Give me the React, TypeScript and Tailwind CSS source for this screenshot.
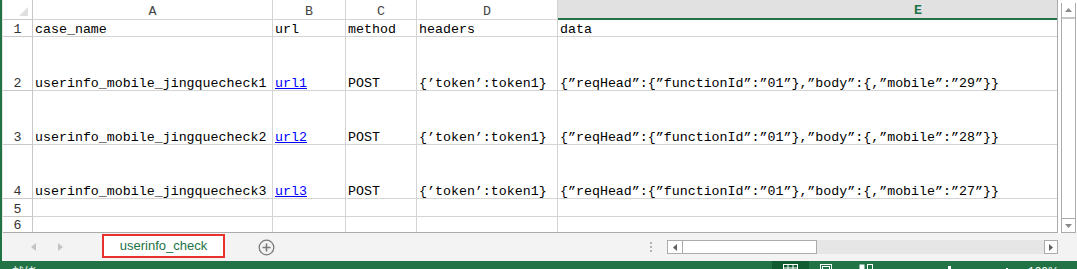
const q = '\u201D';
const s = '\u2019';

const dataText = (n: string) =>
  `{${q}reqHead${q}:{${q}functionId${q}:${q}01${q}},${q}body${q}:{,${q}mobile${q}:${q}${n}${q}}}`;

type Row = { num: number; cells: string[] };

const rows: Row[] = [
  { num: 1, cells: ['case_name', 'url', 'method', 'headers', 'data'] },
  {
    num: 2,
    cells: ['userinfo_mobile_jingquecheck1', 'url1', 'POST', `{${s}token${s}:token1}`, dataText('29')],
  },
  {
    num: 3,
    cells: ['userinfo_mobile_jingquecheck2', 'url2', 'POST', `{${s}token${s}:token1}`, dataText('28')],
  },
  {
    num: 4,
    cells: ['userinfo_mobile_jingquecheck3', 'url3', 'POST', `{${s}token${s}:token1}`, dataText('27')],
  },
  { num: 5, cells: ['', '', '', '', ''] },
  { num: 6, cells: ['', '', '', '', ''] },
];

const letters = ['A', 'B', 'C', 'D'];

const Grid = () => (
  <div className="grid w-[1055px] h-[233px] grid-cols-[30px_240px_73px_71px_141px_499px] grid-rows-[20px_17px_54px_54px_54px_18px_16px] overflow-hidden border-r border-b border-[#ababab]">
    {/* corner */}
    <div className="border-r border-b border-[#c8c8c8] bg-white">
      <svg width="29" height="19">
        <polygon points="25,7 25,16 16,16" fill="#dfdfdf" />
      </svg>
    </div>
    {letters.map((l) => (
      <div
        key={l}
        className="flex items-end justify-center pb-[1px] border-r border-b border-[#d4d4d4] text-[#444] leading-[12px]"
      >
        {l}
      </div>
    ))}
    <div className="flex items-end pl-[356px] pb-[1px] bg-[#e1e1e1] border-b-2 border-[#217346] text-[#217346] font-bold leading-[12px]">
      E
    </div>

    {rows.map((r) => (
      <div key={r.num} className="contents">
        <div className="flex items-end justify-center border-r border-b border-[#c8c8c8] text-[#333] leading-[12px]">
          {r.num}
        </div>
        {r.cells.map((c, i) => (
          <div
            key={i}
            className={`flex items-end pl-[2px] whitespace-nowrap overflow-hidden border-b border-[#d4d4d4] leading-[12px] ${
              i < 4 ? 'border-r' : ''
            }`}
          >
            {i === 1 && r.num > 1 ? <span className="text-[#0000ff] underline">{c}</span> : c}
          </div>
        ))}
      </div>
    ))}
  </div>
);

const VScroll = () => (
  <div className="mt-[3px] flex h-[230px] w-[15px] flex-col border-x border-[#ababab] bg-white">
    <div className="flex h-[16px] items-center justify-center border-b-2 border-[#c6c6c6]">
      <svg width="7" height="4">
        <polygon points="0,4 3.5,0 7,4" fill="#8a8a8a" />
      </svg>
    </div>
    <div className="flex-1" />
    <div className="flex h-[15px] items-center justify-center border-t border-b border-[#ababab]">
      <svg width="7" height="4">
        <polygon points="0,0 3.5,4 7,0" fill="#8a8a8a" />
      </svg>
    </div>
  </div>
);

const TabBar = () => (
  <div className="flex h-[28px] items-center bg-[#f3f3f3]">
    <svg className="ml-[29px]" width="5" height="8">
      <polygon points="5,0 0,4 5,8" fill="#c4c4c4" />
    </svg>
    <svg className="ml-[22px]" width="5" height="8">
      <polygon points="0,0 5,4 0,8" fill="#c4c4c4" />
    </svg>
    <div className="ml-[39px] mb-[3px] flex h-[24px] w-[123px] items-center justify-center border-2 border-[#e8302c] bg-white font-['Liberation_Sans',sans-serif] text-[13px] text-[#217346]">
      userinfo_check
    </div>
    <svg className="ml-[33px]" width="17" height="17" viewBox="0 0 17 17">
      <circle cx="8.5" cy="8.5" r="7.3" fill="none" stroke="#7a7a7a" strokeWidth="1.3" />
      <path d="M8.5 4.5v8M4.5 8.5h8" stroke="#7a7a7a" strokeWidth="1.6" />
    </svg>
    <div className="ml-[375px] flex flex-col gap-[2px]">
      <div className="h-[2px] w-[2px] bg-[#b4b4b4]" />
      <div className="h-[2px] w-[2px] bg-[#b4b4b4]" />
      <div className="h-[2px] w-[2px] bg-[#b4b4b4]" />
    </div>
    <div className="ml-[15px] flex h-[14px] w-[391px]">
      <div className="flex w-[16px] items-center justify-center border border-[#ababab] bg-white">
        <svg width="4" height="7">
          <polygon points="4,0 0,3.5 4,7" fill="#606060" />
        </svg>
      </div>
      <div className="w-[134px] border-y border-r border-[#ababab] bg-white" />
      <div className="flex-1 bg-[#e6e6e6]" />
      <div className="flex w-[14px] items-center justify-center border border-[#ababab] bg-white">
        <svg width="4" height="7">
          <polygon points="0,0 4,3.5 0,7" fill="#606060" />
        </svg>
      </div>
    </div>
  </div>
);

const StatusBar = () => (
  <div className="flex h-[22px] shrink-0 items-start bg-[#217346] text-white">
    <span className="ml-[12px] mt-[4px] w-[24px] font-['Noto_Sans_CJK_SC',sans-serif] text-[12px] leading-[14px]">
      就绪
    </span>
    <div className="ml-[736px] flex h-[22px] w-[37px] justify-center bg-[#0e5c2f] pt-[3px]">
      <svg width="15" height="12">
        <rect x="0.5" y="0.5" width="14" height="11" fill="none" stroke="#fff" />
        <path d="M5 0v12M10 0v12M0 4h15" stroke="#fff" />
      </svg>
    </div>
    <svg className="ml-[11px] mt-[3px]" width="12" height="12">
      <rect x="0.5" y="0.5" width="11" height="11" fill="none" stroke="#fff" />
      <rect x="2.5" y="2.5" width="7" height="3" fill="none" stroke="#fff" />
    </svg>
    <svg className="ml-[27px] mt-[3px]" width="14" height="12">
      <rect x="0.5" y="0.5" width="5" height="11" fill="#fff" />
      <rect x="8.5" y="0.5" width="5" height="11" fill="none" stroke="#fff" />
    </svg>
    <div className="ml-[75px] mt-[5px] h-[10px] w-[3px] bg-white" />
    <div className="ml-[55px] mt-[7px] h-[8px] w-[2px] bg-white" />
    <span className="ml-[20px] mt-[4px] font-['Liberation_Sans',sans-serif] text-[12px] leading-[14px]">
      100%
    </span>
  </div>
);

export default function App() {
  return (
    <div className="flex h-[269px] w-[1077px] flex-col overflow-hidden bg-white font-['Liberation_Mono','Noto_Sans_CJK_SC',monospace] text-[13.3px] text-black">
      <div className="flex h-[261px] shrink-0">
        <div className="w-[2px] bg-[#217346]" />
        <div className="flex flex-1 flex-col">
          <div className="flex h-[233px]">
            <div className="w-[1px] bg-[#e3e3e3]" />
            <Grid />
            <div className="w-[3px]" />
            <VScroll />
          </div>
          <TabBar />
        </div>
      </div>
      <StatusBar />
    </div>
  );
}
